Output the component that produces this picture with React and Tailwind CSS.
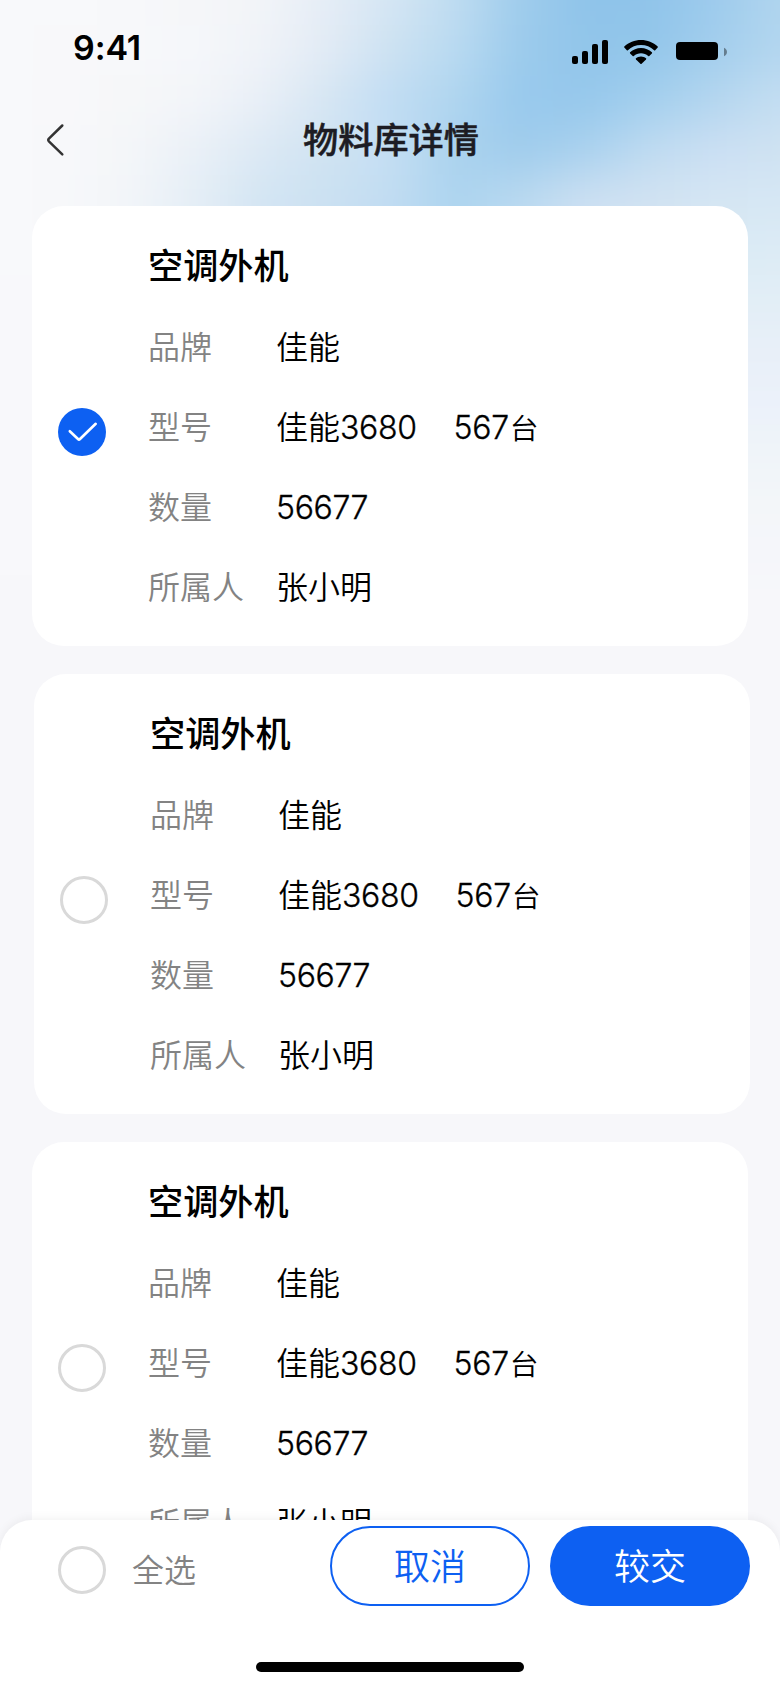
import React from "react";

// Colour rows of the header backdrop, listed left to right across the page.
const backdropRows = [
  { y: 0, colors: ["#f8f9fb", "#f8f9fb", "#f7f8fa", "#f5f6f9", "#f2f4f8", "#e6edf6", "#d5e6f3", "#bfdcf1", "#9fccec", "#8fc4ea", "#8fc4ea", "#9dcbed", "#b0d5ee"] },
  { y: 50, colors: ["#f8f9fb", "#f8f8fa", "#f7f8fa", "#f5f7fa", "#f0f3f8", "#e2ebf5", "#cde2f2", "#b9daf1", "#9ccbec", "#91c5ea", "#93c6ea", "#a3ceed", "#b3d6ef"] },
  { y: 100, colors: ["#f8f9fb", "#f8f8fa", "#f6f7f9", "#f3f5f9", "#e9eff7", "#d6e6f3", "#c0dcf3", "#afd5ef", "#98c9ed", "#96c8ec", "#a3cfee", "#b4d6ef", "#c4def2"] },
  { y: 150, colors: ["#f8f9fb", "#f7f8fa", "#f4f6f9", "#eaf0f7", "#dce9f4", "#d0e3f2", "#c5dff3", "#aad2ee", "#9fccec", "#a9d1ee", "#bfdbf1", "#cbdff3", "#cfe2f2"] },
  { y: 200, colors: ["#f8f9fb", "#f7f8fa", "#f2f5f9", "#e4eef6", "#d3e5f3", "#cbe1f2", "#c1dcf2", "#acd4ef", "#b9d9f0", "#cde0f2", "#d1e2f2", "#d5e6f3", "#d6e7f4"] },
  { y: 250, colors: ["#f8f9fb", "#f8f8fa", "#f2f5f9", "#e4eef6", "#d3e5f3", "#cbe1f2", "#c1dcf2", "#b0d6ef", "#c0dcf1", "#d1e2f2", "#d6e6f3", "#daeaf4", "#dcebf5"] },
  { y: 300, colors: ["#f8f8fb", "#f8f8fa", "#e2eef6", "#e2eef6"] },
  { y: 350, colors: ["#f8f8fb", "#f8f8fa", "#e8eff8", "#e8eff8"] },
  { y: 400, colors: ["#f8f8fb", "#f8f8fa", "#ebf1fa", "#ebf1fa"] },
  { y: 450, colors: ["#f8f8fb", "#f8f8fa", "#eff4f9", "#eff4f9"] },
  { y: 500, colors: ["#f8f8fb", "#f8f8fa", "#f3f6f9", "#f3f6f9"] },
  { y: 550, colors: ["#f8f8fb", "#f8f8fa", "#f5f6fa", "#f5f6fa"] },
  { y: 600, colors: ["#f7f7fa", "#f7f7fa"] },
  { y: 650, colors: ["#f7f7fa", "#f7f7fa"] },
  { y: 700, colors: ["#f7f7fa", "#f7f7fa"] },
];

function Backdrop() {
  return (
    <svg className="pointer-events-none absolute top-0 left-0" width="780" height="680" viewBox="0 0 780 680" aria-hidden="true">
      <defs>
        <filter id="soften" filterUnits="userSpaceOnUse" x="-100" y="-100" width="980" height="880" colorInterpolationFilters="sRGB">
          <feGaussianBlur stdDeviation="16 22" />
        </filter>
        {backdropRows.map((row) => (
          <linearGradient key={row.y} id={`row-${row.y}`} gradientUnits="userSpaceOnUse" x1="0" x2="780" y1="0" y2="0">
            {row.colors.map((color, i) => (
              <stop key={i} offset={i / (row.colors.length - 1)} stopColor={color} />
            ))}
          </linearGradient>
        ))}
      </defs>
      <g filter="url(#soften)">
        {backdropRows.map((row) => (
          <rect
            key={row.y}
            x="-100"
            width="980"
            y={row.y === 0 ? -100 : row.y - 25}
            height={row.y === 0 ? 125 : row.y === 700 ? 120 : 50}
            fill={`url(#row-${row.y})`}
          />
        ))}
      </g>
    </svg>
  );
}

function StatusBar() {
  return (
    <div className="flex h-[96px] items-start justify-between pr-[52px] pl-[73px]">
      <span className="mt-[24px] font-['Inter',sans-serif] text-[34px] leading-[48px] font-semibold tracking-[-0.1px] text-black">9:41</span>
      <svg className="mt-[36px]" width="156" height="32" viewBox="572 36 156 32" fill="#000">
        <rect x="572" y="56" width="6" height="8" rx="2" />
        <rect x="582" y="51" width="6" height="13" rx="2" />
        <rect x="592" y="44" width="6" height="20" rx="2" />
        <rect x="602" y="40" width="6" height="24" rx="2" />
        <g transform="translate(641 0)">
          <path d="M0 40 C6.4 40 12.300 42.400 16.700 46.500 Q17.200 47 16.700 47.600 L14.200 50.200 Q13.700 50.700 13.100 50.200 C9.600 46.900 5 45.100 0 45.100 S-9.600 46.900 -13.100 50.200 Q-13.700 50.700 -14.200 50.200 L-16.700 47.600 Q-17.200 47 -16.700 46.500 C-12.300 42.400 -6.400 40 0 40Z" />
          <path d="M0 48 C4.200 48 8 49.600 10.900 52.300 Q11.400 52.900 10.900 53.500 L8.300 56.100 Q7.800 56.600 7.200 56.100 C5.200 54.300 2.700 53.300 0 53.300 S-5.200 54.300 -7.200 56.100 Q-7.800 56.600 -8.300 56.100 L-10.900 53.500 Q-11.400 52.900 -10.900 52.300 C-8 49.600 -4.200 48 0 48Z" />
          <path d="M0 56.400 C1.900 56.400 3.700 57.100 5 58.200 Q5.600 58.800 5 59.400 L0.600 63.700 Q0 64.200 -0.600 63.700 L-5 59.400 Q-5.600 58.800 -5 58.200 C-3.700 57.100 -1.900 56.400 0 56.400Z" />
        </g>
        <rect x="676" y="42" width="42" height="18" rx="4" />
        <path d="M724 47.700 C725.800 48.500 727 50.200 727 52 S725.800 55.500 724 56.300Z" fillOpacity="0.4" />
      </svg>
    </div>
  );
}

function NavBar() {
  return (
    <div className="grid h-[110px] grid-cols-[80px_1fr_80px] items-start">
      <svg className="mt-[26px] ml-[44px]" width="24" height="36" viewBox="44 122 24 36" fill="none" stroke="#333" strokeWidth="2.500" strokeLinecap="round" strokeLinejoin="round">
        <path d="M62.300 125.500 L48.900 138.700 Q47.700 140 48.900 141.300 L62.300 154.300" />
      </svg>
      <h1 className="mt-[18px] pl-[2px] text-center text-[35.2px] leading-[48px] font-medium text-[#1d1c23] [-webkit-text-stroke:0.5px_#1d1c23]">物料库详情</h1>
    </div>
  );
}

function Radio({ checked }) {
  if (!checked) return <span className="block size-[48px] shrink-0 rounded-full border-[3px] border-[#d9d9d9] bg-white" />;
  return (
    <svg className="shrink-0" width="48" height="48" viewBox="0 0 48 48" fill="none">
      <circle cx="24" cy="24" r="24" fill="#0d60f2" />
      <path d="M11.800 23.200 L20 31 Q21 32 22 31 L37.700 15.800" stroke="#fff" strokeWidth="2.600" strokeLinecap="round" strokeLinejoin="round" />
    </svg>
  );
}

function Row({ label, children }) {
  return (
    <div className="flex h-[80px] items-center">
      <dt className="w-[128px] shrink-0 text-[#838383]">{label}</dt>
      <dd className="flex items-center whitespace-nowrap text-black">{children}</dd>
    </div>
  );
}

function Num({ children }) {
  return <span className="font-['Inter',sans-serif] leading-none font-light tracking-[-0.35px] [-webkit-text-stroke:0.3px_#000]">{children}</span>;
}

function MaterialCard({ item, className }) {
  return (
    <section className={`flex h-[440px] w-[716px] shrink-0 rounded-[32px] bg-white pl-[26px] ${className}`}>
      <div className="mt-[202px] w-[90px]">
        <Radio checked={item.checked} />
      </div>
      <div className="pt-[34px]">
        <h2 className="text-[35.2px] leading-[48px] font-medium text-black">{item.name}</h2>
        <dl className="mt-[17px] text-[32px] leading-[48px] font-[350]">
          <Row label="品牌">{item.brand}</Row>
          <Row label="型号">
            <span>{item.brand}<Num>{item.model}</Num></span>
            <span className="ml-[37px]"><Num>{item.stock}</Num><span className="ml-px text-[28.8px] leading-none">台</span></span>
          </Row>
          <Row label="数量"><span><Num>{item.quantity}</Num></span></Row>
          <Row label="所属人">{item.owner}</Row>
        </dl>
      </div>
    </section>
  );
}

const material = { name: "空调外机", brand: "佳能", model: "3680", stock: "567", quantity: "56677", owner: "张小明" };

export default function App() {
  return (
    <div className="relative flex h-[1688px] w-[780px] flex-col overflow-hidden bg-[#f7f7fa] font-['Noto_Sans_CJK_SC',sans-serif]">
      <Backdrop />
      <header className="relative h-[206px] shrink-0">
        <StatusBar />
        <NavBar />
      </header>
      <main className="relative flex min-h-0 flex-1 flex-col gap-[28px] overflow-hidden">
        <MaterialCard item={{ ...material, checked: true }} className="ml-[32px]" />
        <MaterialCard item={material} className="ml-[34px]" />
        <MaterialCard item={material} className="ml-[32px]" />
      </main>
      <footer className="relative -mt-[32px] flex h-[168px] shrink-0 flex-col items-center justify-between rounded-t-[32px] bg-white pt-[6px] pb-[16px] shadow-[0_-2px_10px_rgba(0,0,0,0.05)]">
        <div className="flex w-full items-start pr-[30px] pl-[58px]">
          <div className="mt-[20px] flex items-center gap-[26px]">
            <Radio />
            <span className="pb-[4px] text-[32px] leading-[44px] font-[350] text-[#838383]">全选</span>
          </div>
          <button className="ml-auto h-[80px] w-[200px] rounded-full border-2 border-[#0d60f2] bg-white pb-[4px] text-[36px] leading-[48px] font-[350] text-[#0d60f2]">取消</button>
          <button className="ml-[20px] h-[80px] w-[200px] rounded-full bg-[#0d60f2] pb-[4px] text-[36px] leading-[48px] font-[350] text-white">较交</button>
        </div>
        <div className="h-[10px] w-[268px] rounded-full bg-black" />
      </footer>
    </div>
  );
}
